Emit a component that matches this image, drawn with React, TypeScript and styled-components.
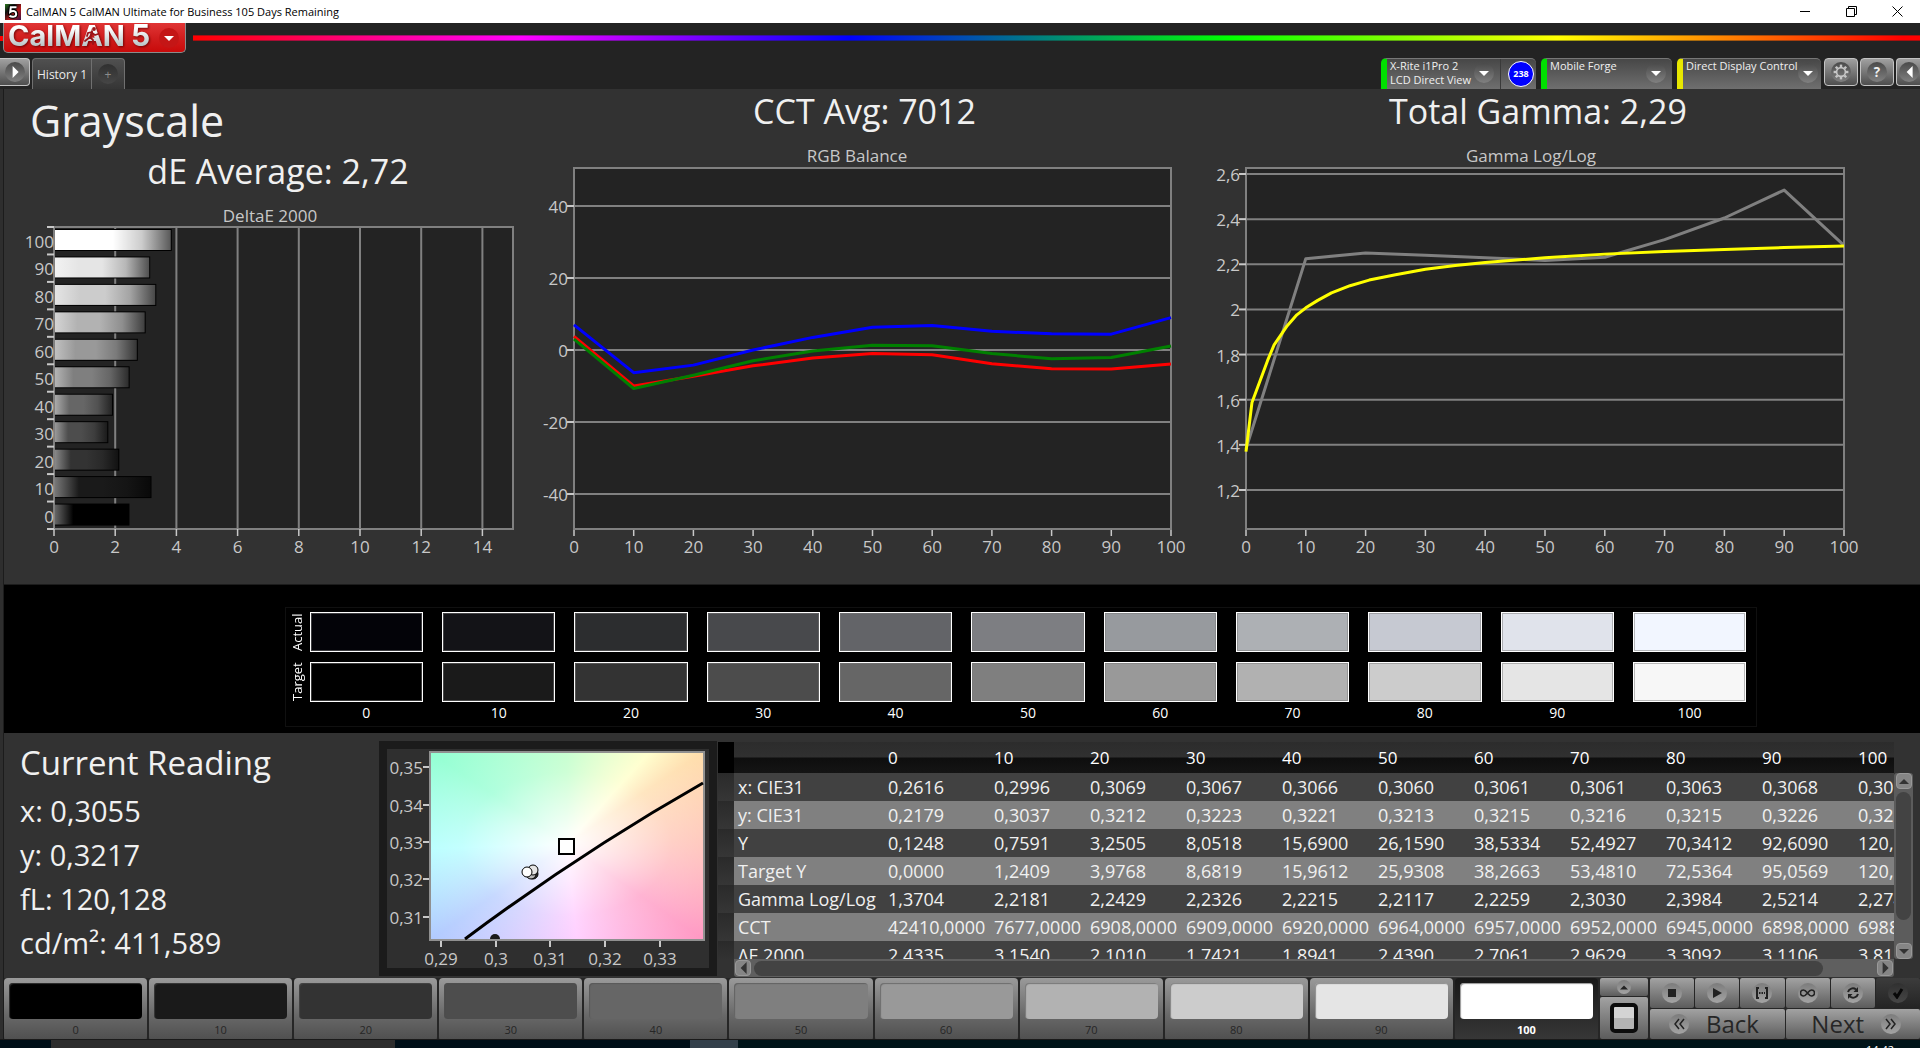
import React from "react";
import styled, { createGlobalStyle, css } from "styled-components";

const LEVELS = [0, 10, 20, 30, 40, 50, 60, 70, 80, 90, 100];
const ACTUAL = ["#030308", "#131317", "#2c2d2f", "#48494c", "#636468", "#7d7e82", "#979a9e", "#adb0b4", "#c6c9d2", "#e0e3eb", "#f2f6ff"];
const TARGET = ["#000000", "#1a1a1a", "#333333", "#4c4c4c", "#666666", "#7f7f7f", "#999999", "#b1b1b1", "#cccccc", "#e5e5e5", "#f7f7f7"];
const STEPS = ["#000000", "#1a1a1a", "#333333", "#4d4d4d", "#666666", "#7f7f7f", "#999999", "#b2b2b2", "#cccccc", "#e5e5e5", "#ffffff"];
const DELTA_E = [2.4335, 3.154, 2.101, 1.7421, 1.8941, 2.439, 2.7061, 2.9629, 3.3092, 3.1106, 3.8158];
const READINGS = ["x: 0,3055", "y: 0,3217", "fL: 120,128", "cd/m²: 411,589"];

const ROWS: [string, string[]][] = [
  ["x: CIE31", ["0,2616", "0,2996", "0,3069", "0,3067", "0,3066", "0,3060", "0,3061", "0,3061", "0,3063", "0,3068", "0,3055"]],
  ["y: CIE31", ["0,2179", "0,3037", "0,3212", "0,3223", "0,3221", "0,3213", "0,3215", "0,3216", "0,3215", "0,3226", "0,3217"]],
  ["Y", ["0,1248", "0,7591", "3,2505", "8,0518", "15,6900", "26,1590", "38,5334", "52,4927", "70,3412", "92,6090", "120,1280"]],
  ["Target Y", ["0,0000", "1,2409", "3,9768", "8,6819", "15,9612", "25,9308", "38,2663", "53,4810", "72,5364", "95,0569", "120,1280"]],
  ["Gamma Log/Log", ["1,3704", "2,2181", "2,2429", "2,2326", "2,2215", "2,2117", "2,2259", "2,3030", "2,3984", "2,5214", "2,2740"]],
  ["CCT", ["42410,0000", "7677,0000", "6908,0000", "6909,0000", "6920,0000", "6964,0000", "6957,0000", "6952,0000", "6945,0000", "6898,0000", "6988,0000"]],
  ["ΔE 2000", ["2,4335", "3,1540", "2,1010", "1,7421", "1,8941", "2,4390", "2,7061", "2,9629", "3,3092", "3,1106", "3,8158"]],
];

const GlobalStyle = createGlobalStyle`
  * { box-sizing: border-box; }
  html, body { margin: 0; background: #232323; }
  body { font-family: "Open Sans", "Noto Sans", sans-serif; color: #f0f0f0; overflow: hidden; }
  button { font-family: inherit; color: inherit; margin: 0; padding: 0; border: 0; cursor: pointer; }
  h1, h2, p { margin: 0; font-weight: 400; }
  svg { display: block; }
`;

const Window = styled.div`
  display: flex;
  flex-direction: column;
  height: 100vh;
  overflow: hidden;
`;

/* ---------- title bar ---------- */
const TitleBar = styled.header`
  display: flex;
  align-items: center;
  flex: none;
  height: 23px;
  padding-left: 5px;
  background: #fff;
  color: #000;
`;
const TitleText = styled.span`
  flex: 1;
  padding-left: 5px;
  font-size: 11px;
  line-height: 22px;
`;
const CaptionButton = styled.button`
  display: grid;
  place-items: center;
  width: 46px;
  height: 22px;
  background: none;
`;

/* ---------- brand strip ---------- */
const BrandStrip = styled.div`
  display: flex;
  align-items: center;
  flex: none;
  height: 31px;
  padding-bottom: 1px;
`;
const RedStub = styled.div`
  width: 3px;
  height: 5px;
  background: #f00;
`;
const BrandButton = styled.button`
  display: flex;
  align-items: center;
  width: 183px;
  height: 30px;
  border: 1px solid #8b8b8b;
  border-top: 0;
  border-radius: 0 0 5px 5px;
  background: linear-gradient(#e03535, #d01c1c 55%, #c80a0a);
`;
const Rainbow = styled.div`
  flex: 1;
  height: 6px;
  margin-left: 7px;
  border: solid rgba(35, 35, 35, 0.4);
  border-width: 1px 0;
  background: linear-gradient(90deg, #f00, #f0f 19%, #00f 38%, #0f0 60%, #ff0 79%, #f00 99%);
  background-origin: border-box;
`;
const LogoSvg = styled.svg`
  overflow: visible;
  font-family: Inter, "Liberation Sans", sans-serif;
  font-weight: 700;
  .letters { filter: drop-shadow(1px 1px 1px rgba(90, 0, 0, 0.8)); }
`;

/* ---------- tab strip ---------- */
const TabStrip = styled.div`
  display: flex;
  align-items: flex-start;
  flex: none;
  height: 35px;
  padding-top: 4px;
`;
const Spacer = styled.div`
  flex: 1;
`;
const Round = styled.span<{ $size?: number; $tone?: "dark" | "light" | "flat" }>`
  display: grid;
  place-items: center;
  flex: none;
  width: ${(p) => p.$size ?? 20}px;
  height: ${(p) => p.$size ?? 20}px;
  border-radius: 50%;
  background: ${(p) =>
    p.$tone === "light" ? "linear-gradient(#7c7c7c, #a4a4a4)" : p.$tone === "flat" ? "linear-gradient(#303030, #464646)" : "linear-gradient(#4a4a4a, #808080)"};
`;
const ChromeButton = styled.button<{ $edge?: "left" | "right" }>`
  display: flex;
  align-items: center;
  justify-content: center;
  width: 34px;
  height: 28px;
  border: 1px solid #c4c4c4;
  border-radius: 4px;
  background: linear-gradient(#a0a0a0, #4e4e4e);
  ${(p) => p.$edge === "left" && css`width: 30px; border-left: 0; border-radius: 0 4px 4px 0;`}
  ${(p) => p.$edge === "right" && css`width: 24px; border-right: 0; border-radius: 4px 0 0 4px;`}
`;
const HistoryTabs = styled.div`
  display: flex;
  height: 31px;
  margin-left: 2px;
  border: 1px solid #707070;
  border-bottom: 0;
  border-radius: 4px 4px 0 0;
  background: linear-gradient(#505050, #353535);
`;
const HistoryTab = styled.button<{ $add?: boolean }>`
  display: grid;
  place-items: center;
  width: ${(p) => (p.$add ? 33 : 58)}px;
  border-left: ${(p) => (p.$add ? "1px solid #707070" : "0")};
  background: none;
  color: ${(p) => (p.$add ? "#8c8c8c" : "#ececec")};
  font-size: 12px;
`;
const Devices = styled.div`
  display: flex;
  gap: 5px;
  margin-right: 3px;
`;
const Device = styled.div<{ $light: string; $width: number }>`
  display: flex;
  width: ${(p) => p.$width}px;
  height: 31px;
  border-top: 1px solid #777;
  border-left: 6px solid ${(p) => p.$light};
  border-radius: 5px 5px 0 0;
  background: linear-gradient(#474747, #6f6f6f);
`;
const DeviceButton = styled.button`
  display: flex;
  justify-content: space-between;
  flex: 1;
  padding: 0 6px 0 3px;
  background: none;
  font-size: 11px;
  line-height: 14px;
  text-align: left;
  white-space: pre;
  > span:last-child { margin-top: 4px; }
`;
const MeterBadge = styled.div`
  display: grid;
  place-items: center;
  width: 36px;
  padding-left: 5px;
  border-left: 1px solid #3a3a3a;
  span {
    width: 26px;
    height: 26px;
    border: 1px solid #fff;
    border-radius: 50%;
    background: #00f;
    color: #fff;
    font-size: 9px;
    font-weight: 700;
    line-height: 24px;
    text-align: center;
  }
`;
const IconRow = styled.div`
  display: flex;
  gap: 2px;
`;

/* ---------- work area ---------- */
const WorkArea = styled.main`
  display: flex;
  flex-direction: column;
  flex: 1;
  min-height: 0;
  padding-left: 4px;
  background: linear-gradient(90deg, #2e2e2e 3px, #1c1c1c 3px 4px, #323232 4px);
`;
const Charts = styled.section`
  display: grid;
  grid-template-columns: 526fr 660fr 730fr;
  flex: none;
  overflow: hidden;
  height: 496px;
  border-bottom: 1px solid #1c1c1c;
`;
const ChartColumn = styled.div`
  display: flex;
  flex-direction: column;
  min-width: 0;
`;
const PageTitle = styled.h1`
  padding: 4px 0 0 26px;
  font-size: 43px;
  line-height: 56px;
`;
const ChartHeading = styled.h2<{ $shift?: number }>`
  padding-left: ${(p) => Math.max(p.$shift ?? 0, 0)}px;
  padding-right: ${(p) => Math.max(-(p.$shift ?? 0), 0)}px;
  font-size: 34px;
  line-height: 44px;
  text-align: center;
`;
const ChartSvg = styled.svg`
  width: 100%;
  height: auto;
  fill: #c8c8c8;
  font-size: 17px;
`;

/* ---------- swatch band ---------- */
const SwatchBand = styled.section`
  flex: none;
  height: 148px;
  padding: 22px 8.5% 0 14.65%;
  background: #000;
`;
const SwatchBox = styled.div`
  display: flex;
  height: 120px;
  padding: 4px 10px 0 0;
  border: 1px solid #101010;
`;
const SwatchLabels = styled.div`
  display: grid;
  grid-template-rows: 40px 40px;
  align-content: start;
  row-gap: 10px;
  width: 24px;
  flex: none;
`;
const SwatchLabel = styled.span`
  writing-mode: vertical-rl;
  transform: rotate(180deg);
  font-size: 13px;
  line-height: 22px;
  text-align: center;
  color: #fff;
`;
const SwatchGrid = styled.div`
  display: grid;
  grid-template-columns: repeat(11, minmax(0, 1fr));
  grid-template-rows: 40px 40px;
  grid-auto-rows: 20px;
  align-content: start;
  gap: 10px 19px;
  flex: 1;
`;
const Swatch = styled.div<{ $color: string }>`
  border: 1px solid #fff;
  box-shadow: inset 0 0 0 1px rgba(120, 120, 120, 0.5);
  background: ${(p) => p.$color};
`;
const SwatchValue = styled.span`
  margin-top: -9px;
  font-size: 14px;
  line-height: 20px;
  text-align: center;
  color: #fff;
`;

/* ---------- readings ---------- */
const Details = styled.section`
  display: flex;
  flex: 1;
  min-height: 0;
`;
const Reading = styled.div`
  width: 375px;
  flex: none;
  padding: 8px 0 0 16px;
  h2 { font-size: 33px; line-height: 44px; margin-bottom: 4px; }
  p { font-size: 29px; line-height: 44px; }
`;
const CieFrame = styled.div`
  flex: none;
  width: 338px;
  height: 235px;
  margin-top: 8px;
  border: 8px solid #1b1b1b;
  background: #2f2f2f;
  padding: 3px 0 0 43px;
`;
const CiePlot = styled.div`
  width: 274px;
  height: 188px;
  background:
    radial-gradient(ellipse 85% 85% at 50% 49%, #fff, rgba(255, 255, 255, 0.35) 45%, rgba(255, 255, 255, 0) 100%),
    conic-gradient(from 0deg at 50% 49%, #b4ffc0, #ffffc0 42deg, #ffd9a0 56deg, #ffb8a8 88deg, #ff8cbc 125deg, #ffc0ff 174deg, #a8c4ff 235deg, #a4ffff 268deg, #84ffcc 304deg, #b4ffc0 360deg);
  svg { overflow: visible; fill: #c8c8c8; font-size: 17px; }
`;
const TablePanel = styled.div`
  display: grid;
  grid-template-columns: minmax(0, 1fr) 19px;
  grid-template-rows: 217px 18px;
  flex: 1;
  min-width: 0;
  padding: 9px 7px 0 1px;
`;
const TableView = styled.div`
  overflow: hidden;
  min-width: 0;
`;
const Table = styled.table`
  width: 1232px;
  table-layout: fixed;
  border-collapse: collapse;
  font-size: 18px;
  line-height: 28px;
  white-space: nowrap;
  th, td { padding: 0 0 0 4px; font-weight: 400; text-align: left; }
  thead th { height: 31px; font-size: 17px; color: #fff; background: linear-gradient(#2c2c2c, #303030 48%, #0e0e0e 52%, #141414); }
  thead th:first-child { background: #000; }
  tbody tr { height: 28px; background: #414141; }
  tbody tr:nth-child(even) { background: #808080; }
  tbody td:first-child { background: linear-gradient(#2a2a2a, #363636); }
`;
const Col = styled.col<{ $width: number }>`
  width: ${(p) => p.$width}px;
`;
const VScroll = styled.div`
  display: flex;
  flex-direction: column;
  align-items: center;
  justify-content: space-between;
  margin-top: 31px;
  border-radius: 3px;
  background: #5c5c5c;
`;
const VThumb = styled.div`
  width: 15px;
  flex: 1;
  margin: 3px 0 23px;
  border-radius: 8px;
  background: #434343;
`;
const HScroll = styled.div`
  display: flex;
  align-items: center;
  margin-left: 16px;
  padding: 0 1px;
  border-radius: 0 0 3px 3px;
  background: #5f5f5f;
`;
const HThumb = styled.div`
  flex: 1;
  height: 15px;
  margin: 0 54px 0 3px;
  border-radius: 8px;
  background: #434343;
`;
const ScrollButton = styled.button`
  display: grid;
  place-items: center;
  flex: none;
  width: 16px;
  height: 16px;
  border: 1px solid #999;
  border-radius: 4px;
  background: #858585;
`;

/* ---------- bottom bar ---------- */
const BottomBar = styled.footer`
  display: flex;
  flex: none;
  gap: 2px;
  height: 61px;
  background: #262626;
`;
const Steps = styled.div`
  display: grid;
  grid-template-columns: repeat(11, 1fr);
  gap: 2px;
  flex: 1;
`;
const Step = styled.button<{ $active?: boolean }>`
  display: flex;
  flex-direction: column;
  padding: 5px 5px 0;
  border-radius: 4px;
  background: ${(p) => (p.$active ? "linear-gradient(#181818, #383838)" : "linear-gradient(#9a9a9a, #686868 60%, #4e4e4e)")};
  color: ${(p) => (p.$active ? "#fff" : "#262626")};
  font-size: 11px;
  font-weight: ${(p) => (p.$active ? 700 : 400)};
  line-height: 22px;
`;
const StepColor = styled.span<{ $color: string }>`
  width: 100%;
  height: 36px;
  border-radius: 4px;
  background: ${(p) => p.$color};
  box-shadow: inset 1px 1px 1px rgba(80, 80, 80, 0.6);
`;
const StepLabel = styled.span`
  width: 100%;
  text-align: center;
`;
const StepControl = styled.div`
  display: flex;
  flex-direction: column;
  gap: 1px;
  width: 48px;
`;
const MetalButton = styled.button<{ $dark?: boolean; $h?: number }>`
  display: flex;
  align-items: center;
  justify-content: center;
  height: ${(p) => (p.$h ? `${p.$h}px` : "auto")};
  border-radius: 2px;
  color: #262626;
  background: ${(p) => (p.$dark ? "linear-gradient(#3c3c3c, #242424)" : "linear-gradient(#a2a2a2, #5c5c5c)")};
`;
const NavButton = styled(MetalButton)<{ $align: "flex-start" | "flex-end" }>`
  justify-content: ${(p) => p.$align};
  gap: 17px;
  padding: 0 19px;
  font-size: 24px;
  line-height: 30px;
`;
const PatternSample = styled.span`
  width: 28px;
  height: 30px;
  border: 4px solid #0c0c0c;
  border-radius: 5px;
  background: linear-gradient(#d4d4d4 50%, #b4b4b4 50%);
`;
const Transport = styled.div`
  display: grid;
  grid-template-rows: 30px 30px;
  gap: 1px;
  width: 270px;
`;
const TransportRow = styled.div<{ $cols: number }>`
  display: grid;
  grid-template-columns: repeat(${(p) => p.$cols}, minmax(0, 1fr));
  gap: 1px;
`;
const Taskbar = styled.div`
  display: flex;
  justify-content: flex-end;
  flex: none;
  height: 9px;
  padding-right: 26px;
  border-top: 1px solid #1a1a1a;
  overflow: hidden;
  font-size: 11px;
  line-height: 20px;
  color: #fff;
  background: linear-gradient(90deg, #000f18 51px, #2d2d2d 51px 395px, #000f18 395px 690px, #33404a 690px 738px, #001419 738px);
`;

const Triangle = ({ dir, size = 10, color = "#fff" }: { dir: "up" | "down" | "left" | "right"; size?: number; color?: string }) => {
  const paths = { down: "M0 3h10L5 8z", up: "M0 8h10L5 3z", left: "M8 0v10L3 5z", right: "M3 0v10l5-5z" };
  return (
    <svg width={size} height={size} viewBox="0 0 10 10" aria-hidden="true">
      <path d={paths[dir]} fill={color} />
    </svg>
  );
};

const Gear = () => (
  <svg width="16" height="16" viewBox="-8 -8 16 16" fill="none" stroke="#c6c6c6" aria-hidden="true">
    <circle r="4.4" strokeWidth="1.6" />
    {[0, 45, 90, 135, 180, 225, 270, 315].map((a) => (
      <path key={a} d="M0-5v-2.4" strokeWidth="2.4" transform={`rotate(${a})`} />
    ))}
  </svg>
);

const Logo = () => (
  <LogoSvg width="152" height="30" viewBox="0 0 152 30" aria-label="CalMAN 5">
    <defs>
      <linearGradient id="silver" x1="0" y1="0" x2="0" y2="1">
        <stop offset="0.3" stopColor="#fff" />
        <stop offset="0.8" stopColor="#b9c4c6" />
      </linearGradient>
    </defs>
    <g className="letters" fill="url(#silver)">
      <text x="4" y="23" fontSize="29">CalMAN</text>
      <text x="127" y="23" fontSize="30">5</text>
    </g>
    <g stroke="#9a1518" strokeWidth="1.8" fill="none" strokeLinecap="round">
      <circle cx="90" cy="6" r="1" fill="#9a1518" />
      <path d="M88 9l-2 5 3 3v4M86 14l-5 4M88 9l-4 1-1 3M88 10l3 2 3-1" />
    </g>
  </LogoSvg>
);

const Line = ({ pts, color, width = 3 }: { pts: number[][]; color: string; width?: number }) => (
  <polyline points={pts.map((p) => p.join(",")).join(" ")} fill="none" stroke={color} strokeWidth={width} strokeLinejoin="round" />
);

/** Bars of the colour error, one for each grey level. */
const DeltaEChart = () => {
  const left = 50, right = 509, top = 34, bottom = 336;
  const unit = (right - left) / 15;
  const cell = (bottom - top) / 11;
  const highlights = ["#666", "#777", "#888", "#999", "#aaa", "#b4b4b4", "#c0c0c0", "#d4d4d4", "#e4e4e4", "#f2f2f2", "#fff"];
  return (
    <ChartSvg viewBox="0 0 526 392" role="img" aria-label="DeltaE 2000">
      <defs>
        {STEPS.map((c, i) => (
          <linearGradient key={c} id={`bar${i}`}>
            <stop offset="0" stopColor={highlights[i]} />
            <stop offset="0.25" stopColor={c} />
            <stop offset="0.5" stopColor={c} />
            <stop offset="0.75" stopColor={c} stopOpacity="0.8" />
            <stop offset="1" stopColor={c} stopOpacity="0.35" />
          </linearGradient>
        ))}
      </defs>
      <text x="266" y="29" textAnchor="middle">DeltaE 2000</text>
      <rect x={left} y={top} width={right - left} height={bottom - top} fill="#232323" stroke="#808080" strokeWidth="2" />
      {[2, 4, 6, 8, 10, 12, 14].map((v) => (
        <path key={v} d={`M${left + v * unit} ${top}V${bottom}`} stroke="#808080" strokeWidth="2" />
      ))}
      {[0, 2, 4, 6, 8, 10, 12, 14].map((v) => (
        <g key={v}>
          <path d={`M${left + v * unit} ${bottom}v7`} stroke="#c8c8c8" strokeWidth="1.5" />
          <text x={left + v * unit} y="360" textAnchor="middle">{v}</text>
        </g>
      ))}
      {LEVELS.map((v, i) => {
        const y = bottom - (i + 1) * cell;
        return (
          <g key={v}>
            <rect x={left + 1} y={y + 2} width={DELTA_E[i] * unit} height="22" fill="#000" />
            <rect x={left + 1} y={y + 3} width={DELTA_E[i] * unit - 1} height="20" fill={`url(#bar${i})`} />
            <path d={`M${left - 7} ${y}h7`} stroke="#c8c8c8" strokeWidth="2" />
            <text x={left} y={y + 21} textAnchor="end">{v}</text>
          </g>
        );
      })}
      <path d={`M${left - 7} ${bottom}h7`} stroke="#c8c8c8" strokeWidth="2" />
    </ChartSvg>
  );
};

type PlotProps = {
  width: number;
  left: number;
  right: number;
  title: string;
  titleX: number;
  yTicks: [string, number][];
  children: React.ReactNode;
};

/** Shared frame of the two line charts: grid, ticks and labels. */
const LinePlot = ({ width, left, right, title, titleX, yTicks, children }: PlotProps) => (
  <ChartSvg viewBox={`0 0 ${width} 452`} role="img" aria-label={title}>
    <text x={titleX} y="29" textAnchor="middle">{title}</text>
    <rect x={left} y="35" width={right - left} height="361" fill="#232323" stroke="#808080" strokeWidth="2" />
    {yTicks.map(([label, y]) => (
      <g key={label}>
        <path d={`M${left} ${y}H${right}`} stroke="#808080" strokeWidth="2" />
        <path d={`M${left - 7} ${y}h7`} stroke="#c8c8c8" strokeWidth="2" />
        <text x={left - 6} y={y + 7} textAnchor="end">{label}</text>
      </g>
    ))}
    {LEVELS.map((v) => {
      const x = left + ((right - left) * v) / 100;
      return (
        <g key={v}>
          <path d={`M${x} 397v6`} stroke="#c8c8c8" strokeWidth="1.5" />
          <text x={x} y="420" textAnchor="middle">{v}</text>
        </g>
      );
    })}
    {children}
  </ChartSvg>
);

const RgbChart = () => {
  const left = 44, right = 641;
  const y = (v: number) => 217 - v * 3.6;
  const series = (values: number[]) => values.map((v, i) => [left + ((right - left) * i) / 10, y(v)]);
  return (
    <LinePlot width={660} left={left} right={right} title="RGB Balance" titleX={327} yTicks={[40, 20, 0, -20, -40].map((v) => [String(v), y(v)])}>
      <Line color="#0000ff" pts={series([7, -6.3, -4.2, 0, 3.5, 6.3, 6.8, 5.2, 4.5, 4.4, 9])} />
      <Line color="#ff0000" pts={series([3.8, -10, -7.3, -4.4, -2.2, -1, -1.3, -3.8, -5.2, -5.3, -3.9])} />
      <Line color="#008000" pts={series([3, -10.7, -7, -3, -0.3, 1.3, 1.2, -1, -2.4, -2.1, 1.1])} />
    </LinePlot>
  );
};

const GammaChart = () => {
  const left = 56, right = 654;
  const y = (v: number) => 41 + (2.6 - v) * 225.7;
  const at = ([x, v]: number[]) => [left + ((right - left) * x) / 100, y(v)];
  const measured = [1.382, 2.225, 2.25, 2.24, 2.229, 2.217, 2.231, 2.309, 2.405, 2.529, 2.284].map((v, i) => at([i * 10, v]));
  const target = [
    [0, 1.37], [1, 1.588], [3.6, 1.773], [4.7, 1.843], [6.9, 1.928], [8.5, 1.976], [10, 2.007], [12, 2.04], [14.3, 2.073], [17.4, 2.105], [20.6, 2.13],
    [25, 2.154], [30, 2.178], [35, 2.195], [40, 2.208], [50, 2.229], [60, 2.245], [70, 2.257], [80, 2.266], [90, 2.274], [100, 2.281],
  ].map(at);
  return (
    <LinePlot width={730} left={left} right={right} title="Gamma Log/Log" titleX={341} yTicks={[2.6, 2.4, 2.2, 2, 1.8, 1.6, 1.4, 1.2].map((v) => [String(v).replace(".", ","), y(v)])}>
      <Line color="#808080" pts={measured} />
      <Line color="#ffff00" pts={target} />
    </LinePlot>
  );
};

/** Overlay of the chromaticity plot; its origin is the plot's top left corner. */
const CieOverlay = () => (
  <svg width="274" height="188" viewBox="0 0 274 188" role="img" aria-label="CIE chromaticity">
    <rect x="0" y="0" width="274" height="188" fill="none" stroke="#909090" strokeWidth="2" />
    {[["0,35", 15], ["0,34", 53], ["0,33", 90], ["0,32", 127], ["0,31", 165]].map(([t, y]) => (
      <g key={t}>
        <path d={`M-7 ${y}h6`} stroke="#c8c8c8" strokeWidth="2" />
        <text x="-7" y={Number(y) + 7} textAnchor="end">{t}</text>
      </g>
    ))}
    {[["0,29", 11], ["0,3", 66], ["0,31", 120], ["0,32", 175], ["0,33", 230]].map(([t, x]) => (
      <g key={t}>
        <path d={`M${x} 189v6`} stroke="#c8c8c8" strokeWidth="2" />
        <text x={x} y="213" textAnchor="middle">{t}</text>
      </g>
    ))}
    <path d="M35 187Q150 101 273 31" fill="none" stroke="#000" strokeWidth="3" />
    <rect x="129" y="87" width="15" height="15" fill="#fff" stroke="#000" strokeWidth="2" />
    <g stroke="#000">
      <circle cx="103" cy="122" r="5" fill="#333" />
      <circle cx="101" cy="122" r="5" fill="#bbb" />
      <circle cx="103" cy="118" r="5" fill="#e5e5e5" />
      <circle cx="97" cy="120" r="5" fill="#fff" />
    </g>
    <path d="M60 187a5 5 0 0 1 10 0z" fill="#1a1a1a" />
  </svg>
);

export default function App() {
  return (
    <Window>
      <GlobalStyle />
      <TitleBar>
        <svg width="16" height="16" viewBox="0 0 16 16" aria-hidden="true">
          <defs>
            <linearGradient id="app" x1="0" y1="0" x2="1" y2="1">
              <stop offset="0" stopColor="#2b7a1e" />
              <stop offset="0.3" stopColor="#101010" />
              <stop offset="0.6" stopColor="#b01818" />
              <stop offset="1" stopColor="#3a1248" />
            </linearGradient>
          </defs>
          <rect width="16" height="16" fill="url(#app)" />
          <path d="M11.5 3.200H5.800L5.200 8c3-1.800 6-.8 6 1.900 0 3-3.800 3.600-6.700 1.900" fill="none" stroke="#000" strokeWidth="4" />
          <path d="M11.5 3.200H5.800L5.200 8c3-1.800 6-.8 6 1.900 0 3-3.800 3.600-6.700 1.900" fill="none" stroke="#fff" strokeWidth="2" />
        </svg>
        <TitleText>CalMAN 5 CalMAN Ultimate for Business 105 Days Remaining</TitleText>
        <CaptionButton aria-label="Minimize">
          <svg width="10" height="10" stroke="#000"><path d="M0 4.5h10" /></svg>
        </CaptionButton>
        <CaptionButton aria-label="Restore">
          <svg width="11" height="11" stroke="#000" fill="none"><path d="M.5 2.5h8v8h-8zM2.5 2.5v-2h8v8h-2" /></svg>
        </CaptionButton>
        <CaptionButton aria-label="Close">
          <svg width="11" height="11" stroke="#000"><path d="M.5 .5l10 10M10.5 .5l-10 10" /></svg>
        </CaptionButton>
      </TitleBar>

      <BrandStrip>
        <RedStub />
        <BrandButton aria-label="CalMAN 5 menu">
          <Logo />
          <svg width="24" height="22" viewBox="0 0 24 22" aria-hidden="true">
            <circle cx="13" cy="11" r="10" fill="#c41616" />
            <path d="M8 9h10l-5 5z" fill="#fff" />
          </svg>
        </BrandButton>
        <Rainbow />
      </BrandStrip>

      <TabStrip>
        <ChromeButton $edge="left" aria-label="Open panel"><Round $tone="dark"><Triangle dir="right" size={12} /></Round></ChromeButton>
        <HistoryTabs>
          <HistoryTab>History 1</HistoryTab>
          <HistoryTab $add aria-label="Add history tab"><Round $tone="flat">+</Round></HistoryTab>
        </HistoryTabs>
        <Spacer />
        <Devices>
          <Device $light="#00e000" $width={155}>
            <DeviceButton><span>{"X-Rite i1Pro 2\nLCD Direct View"}</span><Round><Triangle dir="down" /></Round></DeviceButton>
            <MeterBadge><span>238</span></MeterBadge>
          </Device>
          <Device $light="#00e000" $width={131}>
            <DeviceButton><span>Mobile Forge</span><Round><Triangle dir="down" /></Round></DeviceButton>
          </Device>
          <Device $light="#e8e800" $width={144}>
            <DeviceButton><span>Direct Display Control</span><Round><Triangle dir="down" /></Round></DeviceButton>
          </Device>
        </Devices>
        <IconRow>
          <ChromeButton aria-label="Settings"><Round><Gear /></Round></ChromeButton>
          <ChromeButton aria-label="Help"><Round><b>?</b></Round></ChromeButton>
          <ChromeButton $edge="right" aria-label="Collapse"><Round><Triangle dir="left" size={12} /></Round></ChromeButton>
        </IconRow>
      </TabStrip>

      <WorkArea>
        <Charts>
          <ChartColumn>
            <PageTitle>Grayscale</PageTitle>
            <ChartHeading $shift={22}>dE Average: 2,72</ChartHeading>
            <DeltaEChart />
          </ChartColumn>
          <ChartColumn>
            <ChartHeading $shift={9}>CCT Avg: 7012</ChartHeading>
            <RgbChart />
          </ChartColumn>
          <ChartColumn>
            <ChartHeading $shift={-34}>Total Gamma: 2,29</ChartHeading>
            <GammaChart />
          </ChartColumn>
        </Charts>

        <SwatchBand>
          <SwatchBox>
            <SwatchLabels>
              <SwatchLabel>Actual</SwatchLabel>
              <SwatchLabel>Target</SwatchLabel>
            </SwatchLabels>
            <SwatchGrid>
              {ACTUAL.map((c) => <Swatch key={c} $color={c} />)}
              {TARGET.map((c) => <Swatch key={c} $color={c} />)}
              {LEVELS.map((v) => <SwatchValue key={v}>{v}</SwatchValue>)}
            </SwatchGrid>
          </SwatchBox>
        </SwatchBand>

        <Details>
          <Reading>
            <h2>Current Reading</h2>
            {READINGS.map((r) => <p key={r}>{r}</p>)}
          </Reading>
          <CieFrame>
            <CiePlot><CieOverlay /></CiePlot>
          </CieFrame>
          <TablePanel>
            <TableView>
              <Table>
                <colgroup>
                  <Col $width={16} />
                  <Col $width={150} />
                  <Col $width={106} />
                </colgroup>
                <thead>
                  <tr>
                    <th /><th />
                    {LEVELS.map((v) => <th key={v} scope="col">{v}</th>)}
                  </tr>
                </thead>
                <tbody>
                  {ROWS.map(([name, cells]) => (
                    <tr key={name}>
                      <td />
                      <th scope="row">{name}</th>
                      {cells.map((c, i) => <td key={i}>{c}</td>)}
                    </tr>
                  ))}
                </tbody>
              </Table>
            </TableView>
            <VScroll>
              <ScrollButton aria-label="Scroll up"><Triangle dir="up" color="#333" /></ScrollButton>
              <VThumb />
              <ScrollButton aria-label="Scroll down"><Triangle dir="down" color="#333" /></ScrollButton>
            </VScroll>
            <HScroll>
              <ScrollButton aria-label="Scroll left"><Triangle dir="left" size={12} color="#333" /></ScrollButton>
              <HThumb />
              <ScrollButton aria-label="Scroll right"><Triangle dir="right" size={12} color="#333" /></ScrollButton>
            </HScroll>
          </TablePanel>
        </Details>

        <BottomBar>
          <Steps>
            {LEVELS.map((v, i) => (
              <Step key={v} $active={v === 100}>
                <StepColor $color={STEPS[i]} />
                <StepLabel>{v}</StepLabel>
              </Step>
            ))}
          </Steps>
          <StepControl>
            <MetalButton $h={18} aria-label="More levels"><Round $size={14} $tone="light"><Triangle dir="up" size={8} color="#222" /></Round></MetalButton>
            <MetalButton $h={42} aria-label="Pattern window"><PatternSample /></MetalButton>
          </StepControl>
          <Transport>
            <TransportRow $cols={6}>
              <MetalButton aria-label="Stop"><Round $tone="light"><svg width="8" height="8"><rect width="8" height="8" fill="#222" /></svg></Round></MetalButton>
              <MetalButton aria-label="Read"><Round $tone="light"><svg width="10" height="10"><path d="M1 0v10l9-5z" fill="#222" /></svg></Round></MetalButton>
              <MetalButton aria-label="Read series">
                <Round $tone="light">
                  <svg width="14" height="12" fill="none" stroke="#222" strokeWidth="2"><path d="M4 1H2v10h2M10 1h2v10h-2" /><path d="M4 6h6" strokeDasharray="1.5 1" /></svg>
                </Round>
              </MetalButton>
              <MetalButton aria-label="Continuous">
                <Round $tone="light">
                  <svg width="15" height="8" fill="none" stroke="#222" strokeWidth="1.5"><path d="M7.5 4C5.5 1.5 4.5 1 3.5 1a3 3 0 0 0 0 6c1 0 2-.5 4-3s3-3 4-3a3 3 0 0 1 0 6c-1 0-2-.5-4-3z" /></svg>
                </Round>
              </MetalButton>
              <MetalButton aria-label="Refresh">
                <Round $tone="light">
                  <svg width="14" height="14" viewBox="0 0 14 14" fill="none" stroke="#222" strokeWidth="2"><path d="M2 6a5 5 0 0 1 8-2.5M12 8a5 5 0 0 1-8 2.5" /><path d="M12 1v5H7.5zM2 13V8h4.5z" fill="#222" stroke="none" /></svg>
                </Round>
              </MetalButton>
              <MetalButton $dark aria-label="Accept">
                <Round $tone="flat"><svg width="12" height="12" fill="none" stroke="#080808" strokeWidth="3"><path d="M2 6l3 4 5-8" /></svg></Round>
              </MetalButton>
            </TransportRow>
            <TransportRow $cols={2}>
              <NavButton $align="flex-start">
                <Round $tone="light"><svg width="12" height="12" fill="none" stroke="#222" strokeWidth="1.5"><path d="M6 1L2 6l4 5M11 1L7 6l4 5" /></svg></Round>
                Back
              </NavButton>
              <NavButton $align="flex-end">
                Next
                <Round $tone="light"><svg width="12" height="12" fill="none" stroke="#222" strokeWidth="1.5"><path d="M1 1l4 5-4 5M6 1l4 5-4 5" /></svg></Round>
              </NavButton>
            </TransportRow>
          </Transport>
        </BottomBar>
      </WorkArea>
      <Taskbar>14:42</Taskbar>
    </Window>
  );
}
